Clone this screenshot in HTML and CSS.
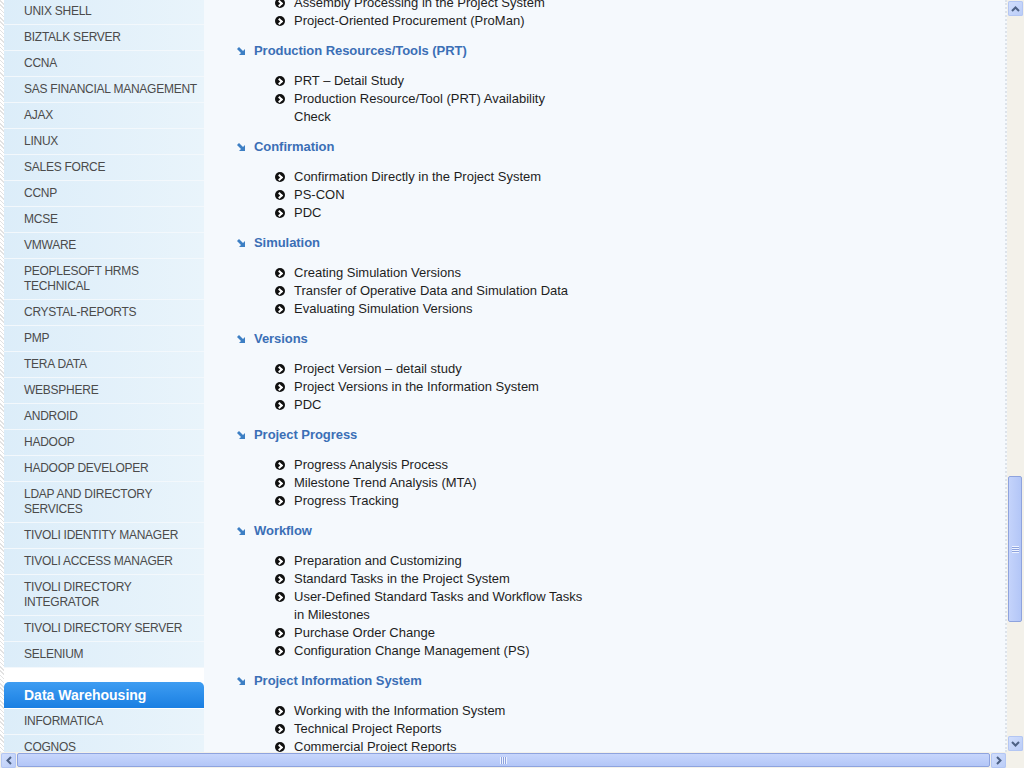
FILE: index.html
```html
<!DOCTYPE html>
<html>
<head>
<meta charset="utf-8">
<link rel="stylesheet" href="styles.css">
</head>
<body>
<div class="window">
  <div class="viewport">
    <div class="strip"></div>
    <aside class="sidebar">
      <ul class="menu">
        <li>UNIX SHELL</li>
        <li>BIZTALK SERVER</li>
        <li>CCNA</li>
        <li>SAS FINANCIAL MANAGEMENT</li>
        <li>AJAX</li>
        <li>LINUX</li>
        <li>SALES FORCE</li>
        <li>CCNP</li>
        <li>MCSE</li>
        <li>VMWARE</li>
        <li>PEOPLESOFT HRMS<br>TECHNICAL</li>
        <li>CRYSTAL-REPORTS</li>
        <li>PMP</li>
        <li>TERA DATA</li>
        <li>WEBSPHERE</li>
        <li>ANDROID</li>
        <li>HADOOP</li>
        <li>HADOOP DEVELOPER</li>
        <li>LDAP AND DIRECTORY<br>SERVICES</li>
        <li>TIVOLI IDENTITY MANAGER</li>
        <li>TIVOLI ACCESS MANAGER</li>
        <li>TIVOLI DIRECTORY<br>INTEGRATOR</li>
        <li>TIVOLI DIRECTORY SERVER</li>
        <li>SELENIUM</li>
      </ul>
      <div class="menu-head">Data Warehousing</div>
      <ul class="menu">
        <li>INFORMATICA</li>
        <li>COGNOS</li>
      </ul>
    </aside>
    <main class="main">
      <ul class="items cont">
        <li>Assembly Processing in the Project System</li>
        <li>Project-Oriented Procurement (ProMan)</li>
      </ul>

      <h3 class="sec"><svg class="ico" width="10" height="9" viewBox="0 0 10 9"><path d="M0 2 L2 0 L6 4 L8 2 L8 8 L2 8 L4 6 Z" fill="#3d7fc4"/></svg>Production Resources/Tools (PRT)</h3>
      <ul class="items">
        <li>PRT – Detail Study</li>
        <li>Production Resource/Tool (PRT) Availability Check</li>
      </ul>

      <h3 class="sec"><svg class="ico" width="10" height="9" viewBox="0 0 10 9"><path d="M0 2 L2 0 L6 4 L8 2 L8 8 L2 8 L4 6 Z" fill="#3d7fc4"/></svg>Confirmation</h3>
      <ul class="items">
        <li>Confirmation Directly in the Project System</li>
        <li>PS-CON</li>
        <li>PDC</li>
      </ul>

      <h3 class="sec"><svg class="ico" width="10" height="9" viewBox="0 0 10 9"><path d="M0 2 L2 0 L6 4 L8 2 L8 8 L2 8 L4 6 Z" fill="#3d7fc4"/></svg>Simulation</h3>
      <ul class="items">
        <li>Creating Simulation Versions</li>
        <li>Transfer of Operative Data and Simulation Data</li>
        <li>Evaluating Simulation Versions</li>
      </ul>

      <h3 class="sec"><svg class="ico" width="10" height="9" viewBox="0 0 10 9"><path d="M0 2 L2 0 L6 4 L8 2 L8 8 L2 8 L4 6 Z" fill="#3d7fc4"/></svg>Versions</h3>
      <ul class="items">
        <li>Project Version – detail study</li>
        <li>Project Versions in the Information System</li>
        <li>PDC</li>
      </ul>

      <h3 class="sec"><svg class="ico" width="10" height="9" viewBox="0 0 10 9"><path d="M0 2 L2 0 L6 4 L8 2 L8 8 L2 8 L4 6 Z" fill="#3d7fc4"/></svg>Project Progress</h3>
      <ul class="items">
        <li>Progress Analysis Process</li>
        <li>Milestone Trend Analysis (MTA)</li>
        <li>Progress Tracking</li>
      </ul>

      <h3 class="sec"><svg class="ico" width="10" height="9" viewBox="0 0 10 9"><path d="M0 2 L2 0 L6 4 L8 2 L8 8 L2 8 L4 6 Z" fill="#3d7fc4"/></svg>Workflow</h3>
      <ul class="items">
        <li>Preparation and Customizing</li>
        <li>Standard Tasks in the Project System</li>
        <li>User-Defined Standard Tasks and Workflow Tasks in Milestones</li>
        <li>Purchase Order Change</li>
        <li>Configuration Change Management (PS)</li>
      </ul>

      <h3 class="sec"><svg class="ico" width="10" height="9" viewBox="0 0 10 9"><path d="M0 2 L2 0 L6 4 L8 2 L8 8 L2 8 L4 6 Z" fill="#3d7fc4"/></svg>Project Information System</h3>
      <ul class="items">
        <li>Working with the Information System</li>
        <li>Technical Project Reports</li>
        <li>Commercial Project Reports</li>
      </ul>
    </main>
    <div class="vscroll">
      <div class="sbtn"><svg width="9" height="6" viewBox="0 0 9 6"><path d="M1 5 L4.5 1.5 L8 5" fill="none" stroke="#4d6185" stroke-width="2"/></svg></div>
      <div class="vtrack">
        <div class="vthumb"><span class="grip-v"></span></div>
      </div>
      <div class="sbtn"><svg width="9" height="6" viewBox="0 0 9 6"><path d="M1 1 L4.5 4.5 L8 1" fill="none" stroke="#4d6185" stroke-width="2"/></svg></div>
    </div>
  </div>
  <div class="hbar">
    <div class="hscroll">
      <div class="sbtn"><svg width="6" height="9" viewBox="0 0 6 9"><path d="M5 1 L1.5 4.5 L5 8" fill="none" stroke="#4d6185" stroke-width="2"/></svg></div>
      <div class="hthumb"><span class="grip-h"></span></div>
      <div class="sbtn"><svg width="6" height="9" viewBox="0 0 6 9"><path d="M1 1 L4.5 4.5 L1 8" fill="none" stroke="#4d6185" stroke-width="2"/></svg></div>
    </div>
    <div class="corner"></div>
  </div>
</div>
</body>
</html>
```
FILE: styles.css
```css
html, body {
  margin: 0;
  padding: 0;
  overflow: hidden;
  width: 1024px;
  height: 768px;
  font-family: "Liberation Sans", Arial, sans-serif;
}

.window {
  width: 1024px;
  height: 768px;
  display: flex;
  flex-direction: column;
}

.viewport {
  height: 752px;
  display: flex;
  overflow: hidden;
}

.strip {
  width: 4px;
  flex: none;
  background-color: #f2f2f2;
  background-image: repeating-linear-gradient(45deg, #e2e2e2 0 1px, #ffffff 1px 3px);
}

.sidebar {
  width: 200px;
  flex: none;
  background: #ffffff;
  overflow: hidden;
}

.menu {
  list-style: none;
  margin: 0;
  padding: 0;
}

.menu:first-child {
  margin-top: -1px;
  margin-bottom: 14px;
}

.menu li {
  padding: 5px 0 5px 20px;
  line-height: 15px;
  font-size: 12px;
  letter-spacing: -0.25px;
  color: #4b4b4b;
  background: linear-gradient(to right, #dcedf9, #e9f4fb);
  border-bottom: 1px solid #f3f8fc;
}

.menu-head {
  height: 26px;
  line-height: 26px;
  padding-left: 20px;
  border-radius: 5px 5px 0 0;
  background: linear-gradient(to bottom, #3e9df2, #1a7fe2);
  color: #ffffff;
  font-weight: bold;
  font-size: 14px;
  margin-bottom: 1px;
}

.main {
  flex: 1;
  background: #f5f9fd;
  padding-left: 33px;
  overflow: hidden;
  border-right: 2px dotted #dde3ea;
}

.items {
  list-style: none;
  margin: 0 0 12px 0;
  padding: 0 0 0 37px;
}

.cont {
  margin-top: -6px;
}

.items li {
  position: relative;
  width: 289px;
  padding-left: 20px;
  line-height: 18px;
  font-size: 13px;
  color: #1e1e1e;
}

.items li::before {
  content: "";
  position: absolute;
  left: 1px;
  top: 4px;
  width: 10px;
  height: 10px;
  border-radius: 50%;
  background: #111111;
}

.items li::after {
  content: "";
  position: absolute;
  left: 3px;
  top: 7px;
  width: 3px;
  height: 3px;
  border-top: 2px solid #ffffff;
  border-right: 2px solid #ffffff;
  transform: rotate(45deg);
}

.sec {
  display: flex;
  align-items: center;
  gap: 7px;
  margin: 0 0 12px 0;
  line-height: 18px;
  font-size: 13px;
  font-weight: bold;
  letter-spacing: -0.05px;
  color: #3b6fb6;
}

.ico {
  flex: none;
}

.vscroll {
  width: 17px;
  flex: none;
  display: flex;
  flex-direction: column;
  background: #f3f1ea;
}

.sbtn {
  width: 15px;
  height: 15px;
  margin: 1px;
  flex: none;
  border-radius: 2px;
  background: linear-gradient(135deg, #d3e0fd, #b9cbf7);
  box-shadow: inset 0 0 0 1px #b3c6f3;
  display: flex;
  align-items: center;
  justify-content: center;
}

.vtrack {
  flex: 1;
  display: flex;
  flex-direction: column;
  padding-top: 459px;
}

.vthumb {
  width: 14px;
  height: 146px;
  margin-left: 1px;
  border-radius: 2px;
  border: 1px solid #8ea3de;
  background: linear-gradient(to right, #c4d3fb, #b3c6f7);
  display: flex;
  align-items: center;
  justify-content: center;
  box-sizing: border-box;
}

.grip-v {
  width: 7px;
  height: 7px;
  background: repeating-linear-gradient(to bottom, #eef3ff 0 1px, #8ea3de 1px 2px);
}

.hbar {
  height: 16px;
  display: flex;
}

.hscroll {
  flex: 1;
  display: flex;
  align-items: center;
  background: #f3f1ea;
}

.hthumb {
  flex: 1;
  height: 14px;
  border-radius: 2px;
  border: 1px solid #8ea3de;
  background: linear-gradient(to bottom, #c7d6fc, #b3c6f7);
  display: flex;
  align-items: center;
  justify-content: center;
  box-sizing: border-box;
}

.grip-h {
  width: 7px;
  height: 7px;
  background: repeating-linear-gradient(to right, #eef3ff 0 1px, #8ea3de 1px 2px);
}

.corner {
  width: 17px;
  flex: none;
  background: #f3f1ea;
}
```
